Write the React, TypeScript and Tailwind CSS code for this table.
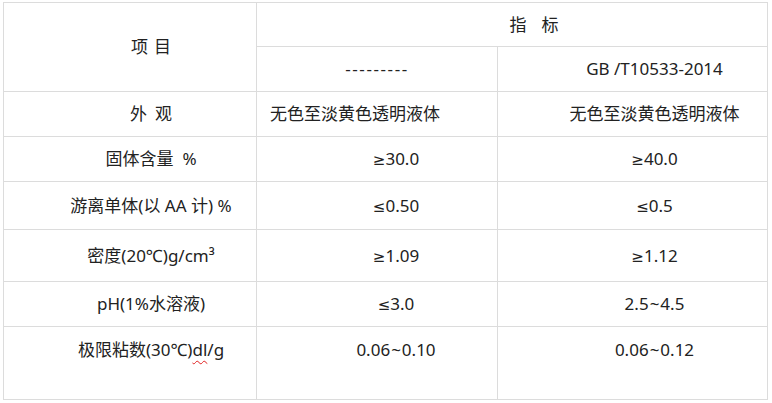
// ─── Spec table (指标) ────────────────────────────────────────────────────────

const line = 'border border-[#dcdcdc]'

function Cell({
  children,
  className = '',
  colSpan,
  rowSpan,
}: {
  children?: React.ReactNode
  className?: string
  colSpan?: number
  rowSpan?: number
}) {
  return (
    <td colSpan={colSpan} rowSpan={rowSpan} className={`${line} p-0 text-center align-middle ${className}`}>
      {children}
    </td>
  )
}

// math signs in a latin font, the CJK one draws them slanted
const Sym = ({ c }: { c: string }) => (
  <span style={{ fontFamily: '"DejaVu Sans", sans-serif' }} className="text-[15px]">
    {c}
  </span>
)

const Tilde = () => <span className="inline-block px-[1px]">~</span>

const rows: { label: React.ReactNode; a: React.ReactNode; b: React.ReactNode; h: string }[] = [
  {
    label: (
      <>
        固体含量<span className="inline-block w-[9px]" />%
      </>
    ),
    a: <><Sym c="≥" />30.0</>,
    b: <><Sym c="≥" />40.0</>,
    h: 'h-[45px]',
  },
  { label: '游离单体(以 AA 计) %', a: <><Sym c="≤" />0.50</>, b: <><Sym c="≤" />0.5</>, h: 'h-[48px]' },
  { label: '密度(20℃)g/cm³', a: <><Sym c="≥" />1.09</>, b: <><Sym c="≥" />1.12</>, h: 'h-[52px]' },
  { label: 'pH(1%水溶液)', a: <><Sym c="≤" />3.0</>, b: <>2.5<Tilde />4.5</>, h: 'h-[45px]' },
]

export default function App() {
  return (
    <div
      className="w-[772px] h-[403px] bg-white pt-[2px] pl-[3px] text-[17px] text-[#222]"
      style={{ fontFamily: '"Noto Sans", "Noto Sans CJK SC", sans-serif' }}
    >
      <table className="table-fixed border-collapse w-[764px]">
        <colgroup>
          <col className="w-[253px]" />
          <col className="w-[241px]" />
          <col className="w-[270px]" />
        </colgroup>
        <tbody>
          {/* header */}
          <tr className="h-[44px]">
            <Cell rowSpan={2} className="pl-[42px]">
              项<span className="inline-block w-[6px]" />目
            </Cell>
            <Cell colSpan={2} className="pl-[44px]">
              指<span className="inline-block w-[15px]" />标
            </Cell>
          </tr>
          <tr className="h-[45px]">
            <Cell className="tracking-[1.6px]">---------</Cell>
            <Cell className="pl-[44px]">GB /T10533-2014</Cell>
          </tr>

          <tr className="h-[45px]">
            <Cell className="pl-[42px]">
              外<span className="inline-block w-[8px]" />观
            </Cell>
            <Cell className="!text-left pl-[13px]">无色至淡黄色透明液体</Cell>
            <Cell className="pl-[44px]">无色至淡黄色透明液体</Cell>
          </tr>

          {rows.map((r, i) => (
            <tr key={i} className={r.h}>
              <Cell className="pl-[42px]">{r.label}</Cell>
              <Cell className="pl-[38px]">{r.a}</Cell>
              <Cell className="pl-[44px]">{r.b}</Cell>
            </tr>
          ))}

          {/* last row, text sits at the top */}
          <tr className="h-[73px]">
            <Cell className="!align-top pt-[10px] pl-[42px]">
              极限粘数(30℃)
              <span className="underline decoration-wavy decoration-[#e02020] decoration-1 underline-offset-[4px]">dl</span>
              /g
            </Cell>
            <Cell className="!align-top pt-[10px] pl-[38px]">
              0.06<Tilde />0.10
            </Cell>
            <Cell className="!align-top pt-[10px] pl-[44px]">
              0.06<Tilde />0.12
            </Cell>
          </tr>
        </tbody>
      </table>
    </div>
  )
}
